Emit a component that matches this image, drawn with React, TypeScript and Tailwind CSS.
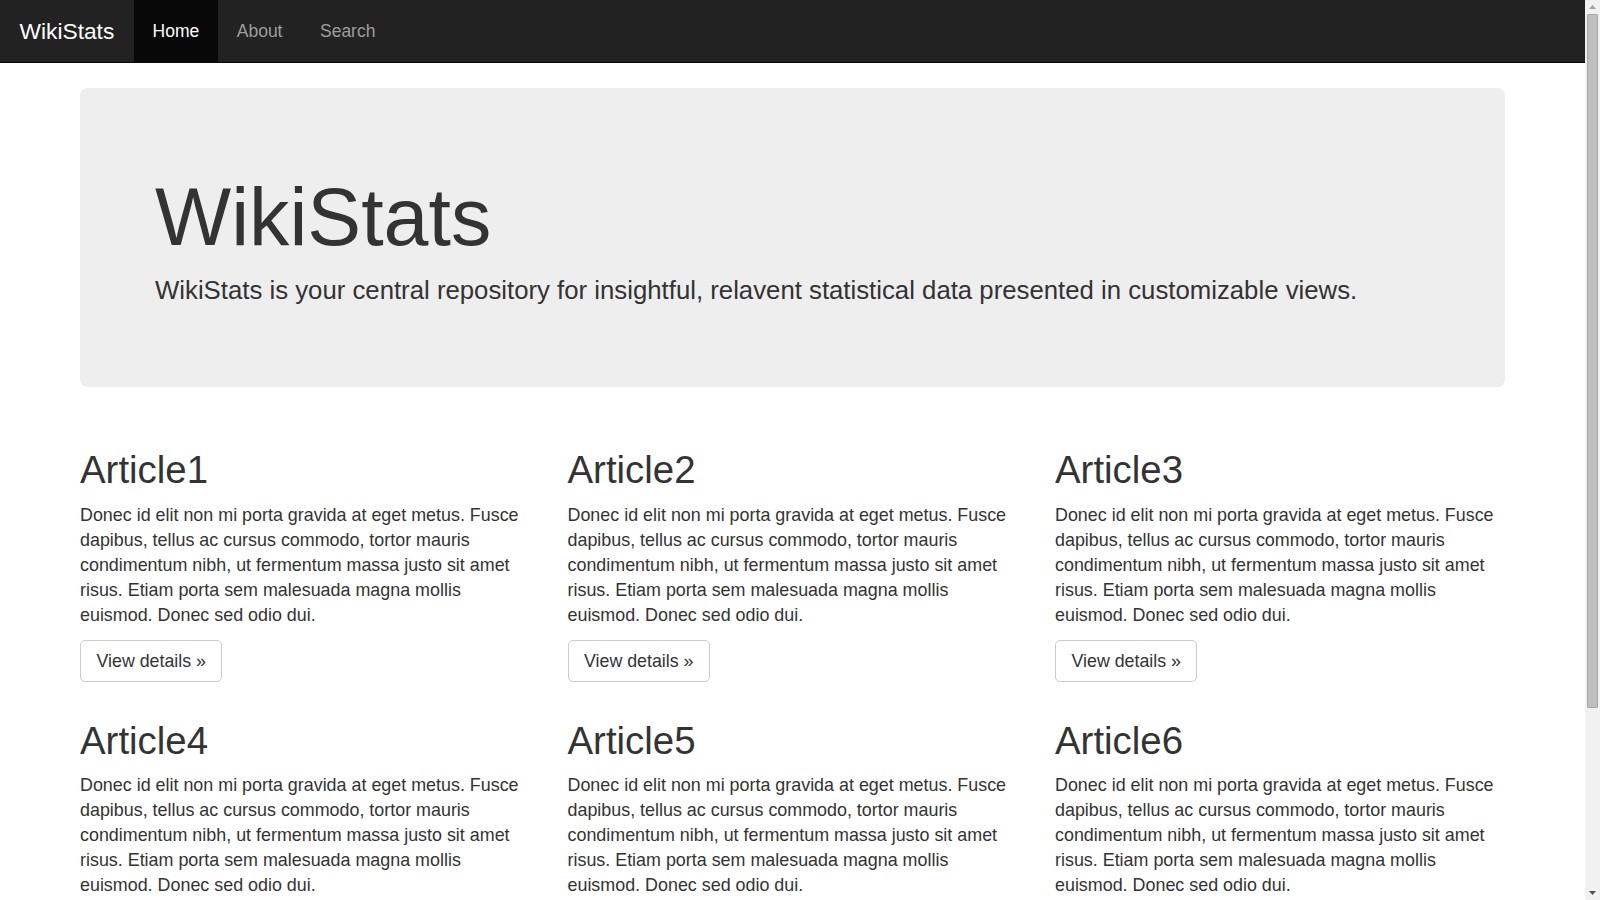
import React from 'react';

const articles = ['Article1', 'Article2', 'Article3', 'Article4', 'Article5', 'Article6'];

const body =
  'Donec id elit non mi porta gravida at eget metus. Fusce dapibus, tellus ac cursus commodo, tortor mauris condimentum nibh, ut fermentum massa justo sit amet risus. Etiam porta sem malesuada magna mollis euismod. Donec sed odio dui.';

function Navbar() {
  return (
    <nav className="bg-[#222] border-b border-[#080808]">
      <div className="flex h-[62px] items-stretch">
        <a href="#" className="flex items-center px-[19.5px] text-[22.75px] text-[#fff]">
          WikiStats
        </a>
        <a href="#" className="flex items-center px-[18.75px] text-[17.5px] bg-[#080808] text-white">
          Home
        </a>
        <a href="#" className="flex items-center px-[18.75px] text-[17.5px] text-[#9d9d9d]">
          About
        </a>
        <a href="#" className="flex items-center px-[18.75px] text-[17.5px] text-[#9d9d9d]">
          Search
        </a>
      </div>
    </nav>
  );
}

// drawn window scrollbar, as seen at the right edge of the screenshot
function Scrollbar() {
  return (
    <div className="flex w-[15px] shrink-0 flex-col items-center bg-[#f1f1f1]">
      <svg width="15" height="14" viewBox="0 0 15 14">
        <path d="M4 9 L7.5 5 L11 9 Z" fill="#a3a3a3" />
      </svg>
      <div className="h-[694px] w-[11px] rounded-[1px] border border-[#a8a8a8] bg-[#bfbfbf]" />
      <div className="flex-1" />
      <svg width="15" height="14" viewBox="0 0 15 14">
        <path d="M4 5 L7.5 9 L11 5 Z" fill="#505050" />
      </svg>
    </div>
  );
}

export default function App() {
  return (
    <div
      className="flex h-screen overflow-hidden bg-white text-[#333] text-[17.9px] leading-[25px]"
      style={{ fontFamily: '"Liberation Sans", Arial, sans-serif' }}
    >
      <div className="flex-1 min-w-0">
        <Navbar />
        <div className="mx-auto w-[1462.5px] px-[18.75px] pt-[24.5px]">
          {/* Jumbotron */}
          <div className="rounded-[7.5px] bg-[#eee] px-[75px] py-[60px] mb-[36.5px]">
            <h1 className="mt-[25px] mb-[12.5px] text-[80.7px] leading-[88px]">WikiStats</h1>
            <p className="mb-[18.75px] text-[25.75px] leading-[35.5px]">
              WikiStats is your central repository for insightful, relavent statistical data presented in
              customizable views.
            </p>
          </div>

          {/* Articles */}
          <div className="grid grid-cols-3 gap-x-[37.5px]">
            {articles.map((title) => (
              <div key={title}>
                <h2 className="mt-[25px] mb-[12.5px] text-[38.4px] leading-[41.25px]">{title}</h2>
                <p className="mb-[12.5px]">{body}</p>
                <p className="mb-[12.5px]">
                  <a
                    href="#"
                    className="inline-block rounded-[5px] border border-[#ccc] bg-white px-[15.5px] py-[7.5px] text-[17.8px] leading-[25px] text-[#333]"
                  >
                    View details &raquo;
                  </a>
                </p>
              </div>
            ))}
          </div>
        </div>
      </div>
      <Scrollbar />
    </div>
  );
}
